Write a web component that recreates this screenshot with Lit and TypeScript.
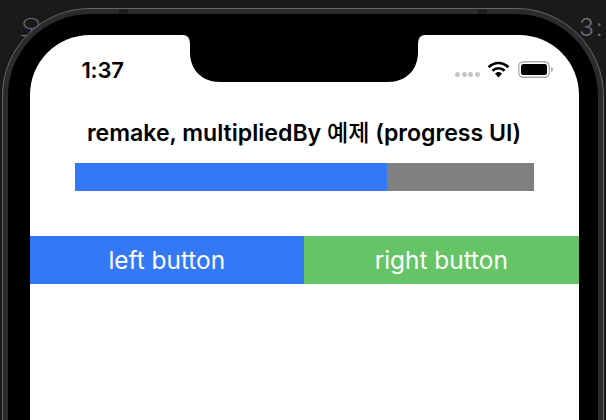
import { LitElement, html, css } from "lit";
import { customElement } from "lit/decorators.js";

@customElement("app-root")
export class AppRoot extends LitElement {
  static styles = css`
    :host {
      display: block;
      position: relative;
      width: 606px;
      height: 420px;
      overflow: hidden;
      background: #1a1a1b;
      font-family: Inter, "Noto Sans CJK KR", "Liberation Sans", sans-serif;
    }
    .ghost {
      position: absolute;
      top: 12px;
      font-family: Inter, "Noto Sans CJK KR", sans-serif;
      font-size: 24.5px;
      line-height: 30px;
      font-weight: 300;
      color: #6c6c6e;
    }
    .ghost.left { left: 20px; top: 13px; }
    .ghost.right { left: 579px; letter-spacing: 2px; }
    .device {
      position: relative;
      box-sizing: border-box;
      width: 602px;
      height: 520px;
      margin: 8px 0 0 2px;
      padding: 5px 5px 0 5px;
      border: 1.5px solid #66666a;
      border-radius: 88px;
      background: #2b2b2d;
    }
    .band {
      position: absolute;
      top: 0;
      width: 9px;
      height: 5px;
      background: #1e1e20;
    }
    .band.a { left: 116px; }
    .band.b { left: 475px; }
    .bezel {
      box-sizing: border-box;
      height: 100%;
      padding: 21px 20.5px 0 21.5px;
      background: #000;
      border-radius: 82px;
    }
    .screen {
      position: relative;
      height: 470px;
      width: 549px;
      background: #fff;
      border-radius: 60px;
      overflow: hidden;
    }
    .notch {
      position: absolute;
      top: 0;
      left: 0;
      display: block;
    }
    .status {
      display: flex;
      align-items: center;
      height: 70px;
      padding: 0 26px 0 52px;
    }
    .time {
      flex: 1;
      font-size: 22px;
      font-weight: 600;
      letter-spacing: -0.2px;
      color: #000;
    }
    .dots {
      display: flex;
      gap: 1.4px;
      margin: 9px 7px 0 0;
    }
    .dots i {
      width: 5px;
      height: 5px;
      border-radius: 50%;
      background: #c6c6c8;
    }
    .wifi, .battery { display: block; margin-bottom: 2px; }
    .wifi { margin-right: 8px; }
    .title {
      margin: 0;
      height: 58px;
      line-height: 56px;
      text-align: center;
      font-size: 23.1px;
      font-weight: 600;
      color: #000;
    }
    .title span { font-weight: 500; }
    .track {
      display: flex;
      height: 28px;
      margin: 0 45px;
      background: #808080;
    }
    .fill {
      background: #3478f6;
    }
    .buttons {
      display: flex;
      height: 48px;
      margin-top: 45px;
    }
    .btn {
      flex: 1;
      border: 0;
      padding: 0;
      color: #fff;
      font: inherit;
      font-size: 24.4px;
      font-weight: 400;
    }
    .btn.l { background: #3478f6; }
    .btn.r { background: #65c466; }
  `;

  render() {
    const progress = 68;
    return html`
      <span class="ghost left">오</span>
      <span class="ghost right">3:</span>
      <div class="device">
        <span class="band a"></span>
        <span class="band b"></span>
        <div class="bezel">
          <div class="screen">
            <div class="status">
              <span class="time">1:37</span>
              <span class="dots"><i></i><i></i><i></i><i></i></span>
              <svg class="wifi" width="23" height="17" viewBox="0 0 23 17">
                <path d="M1.6 6.2C7.4 0.6 15.6 0.6 21.4 6.2" fill="none" stroke="#000" stroke-width="2.7"/>
                <path d="M5.4 9.8C9 6.4 14 6.4 17.6 9.8" fill="none" stroke="#000" stroke-width="2.7"/>
                <path d="M7.9 12.6C10 10.4 13 10.4 15.1 12.6L11.5 16.5Z" fill="#000"/>
              </svg>
              <svg class="battery" width="35" height="17" viewBox="0 0 35 17">
                <rect x="0.75" y="0.75" width="30.5" height="15.5" rx="4.5" fill="#fff" stroke="#a9a9ab" stroke-width="1.3"/>
                <rect x="3" y="3" width="26" height="11" rx="2.5" fill="#000"/>
                <path d="M33 6v5c1.2-.4 2-1.4 2-2.5S34.200 6.400 33 6Z" fill="#a9a9ab"/>
              </svg>
            </div>
            <h1 class="title">remake, multipliedBy <span>예제</span> (progress UI)</h1>
            <div class="track">
              <div class="fill" style="width:${progress}%"></div>
            </div>
            <div class="buttons">
              <button class="btn l">left button</button>
              <button class="btn r">right button</button>
            </div>
            <svg class="notch" width="549" height="48" viewBox="0 0 549 48">
              <path d="M153 0Q160 0 160 9V17C160 35 172 47 190 47H358C376 47 388 35 388 17V9Q388 0 395 0Z" fill="#000"/>
            </svg>
          </div>
        </div>
      </div>
    `;
  }
}
